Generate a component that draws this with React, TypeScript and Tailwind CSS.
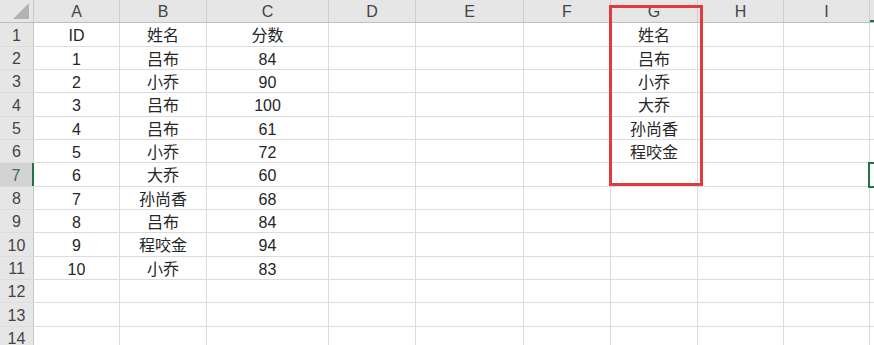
const COLS = [
  { key: 'A', w: 'w-[86px]' },
  { key: 'B', w: 'w-[87px]' },
  { key: 'C', w: 'w-[122px]' },
  { key: 'D', w: 'w-[87px]' },
  { key: 'E', w: 'w-[108px]' },
  { key: 'F', w: 'w-[87px]' },
  { key: 'G', w: 'w-[87px]' },
  { key: 'H', w: 'w-[86px]' },
  { key: 'I', w: 'w-[86px]' },
  { key: 'J', w: 'w-[86px]' },
];

// sheet contents, by row then column letter
const DATA: Record<number, Record<string, string>> = {
  1: { A: 'ID', B: '姓名', C: '分数', G: '姓名' },
  2: { A: '1', B: '吕布', C: '84', G: '吕布' },
  3: { A: '2', B: '小乔', C: '90', G: '小乔' },
  4: { A: '3', B: '吕布', C: '100', G: '大乔' },
  5: { A: '4', B: '吕布', C: '61', G: '孙尚香' },
  6: { A: '5', B: '小乔', C: '72', G: '程咬金' },
  7: { A: '6', B: '大乔', C: '60' },
  8: { A: '7', B: '孙尚香', C: '68' },
  9: { A: '8', B: '吕布', C: '84' },
  10: { A: '9', B: '程咬金', C: '94' },
  11: { A: '10', B: '小乔', C: '83' },
};

const ROWS = Array.from({ length: 14 }, (_, i) => i + 1);
const ACTIVE_ROW = 7;

export default function App() {
  return (
    <div className="relative h-[345px] w-[874px] overflow-hidden bg-white font-['Liberation_Sans','Noto_Sans_CJK_SC',sans-serif] text-[16px]">
      {/* column headers */}
      <div className="flex h-[23px] border-b border-[#bfbfbf] bg-[#e6e6e6] text-[#444]">
        <div className="relative w-[34px] shrink-0 border-r border-[#c8c8c8]">
          <svg className="absolute right-[4px] bottom-[3px]" width="16" height="16" viewBox="0 0 16 16">
            <polygon points="16,0 16,16 0,16" fill="#b3b3b3" />
          </svg>
        </div>
        {COLS.map((c) => (
          <div
            key={c.key}
            className={`${c.w} flex shrink-0 items-center justify-center border-r border-[#cfcfcf] pt-[2px] leading-none ${
              c.key === 'J' ? 'border-b-2 border-b-[#217346]' : ''
            }`}
          >
            {c.key === 'J' ? '' : c.key}
          </div>
        ))}
      </div>

      {ROWS.map((r, i) => (
        <div key={r} className={`flex ${i % 3 === 0 ? 'h-[24px]' : 'h-[23px]'} border-b border-[#dcdcdc]`}>
          <div
            className={`flex w-[34px] shrink-0 items-center justify-center pt-[2px] leading-none ${
              r === ACTIVE_ROW
                ? 'border-r-2 border-[#217346] bg-[#d3d3d3] text-[#3d6b4f]'
                : 'border-r border-[#c8c8c8] bg-[#e6e6e6] text-[#444]'
            }`}
          >
            {r}
          </div>
          {COLS.map((c) => (
            <div
              key={c.key}
              className={`${c.w} flex shrink-0 items-center justify-center border-r border-[#dcdcdc] pt-[3px] leading-none text-[#262626]`}
            >
              {DATA[r]?.[c.key] ?? ''}
            </div>
          ))}
        </div>
      ))}

      {/* highlight box drawn over column G */}
      <div className="pointer-events-none absolute top-[5px] left-[609px] h-[181px] w-[94px] border-[3px] border-[#e03a3e]" />
      {/* active cell J7 */}
      <div className="pointer-events-none absolute top-[162px] left-[868px] h-[26px] w-[20px] border-2 border-[#217346]" />
    </div>
  );
}
